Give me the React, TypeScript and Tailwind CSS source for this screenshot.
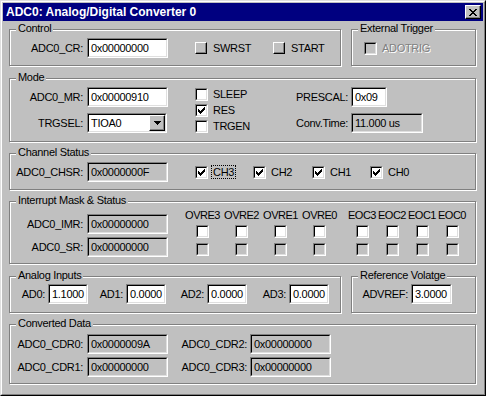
import type { ReactNode } from 'react'

// Win95-style bevels
const sunkenOuter = 'border border-t-[#808080] border-l-[#808080] border-r-white border-b-white'
const sunkenInner = 'border border-t-black border-l-black border-r-[#dfdfdf] border-b-[#dfdfdf]'
const raised = 'border border-t-white border-l-white border-r-black border-b-black shadow-[inset_-1px_-1px_0_#808080]'

function Group({ title, className, children }: { title: string; className: string; children?: ReactNode }) {
  return (
    <div className={`relative border border-[#808080] shadow-[inset_1px_1px_0_#fff,1px_1px_0_#fff] ${className}`}>
      <span className="absolute left-[6px] top-[-8px] px-[2px] bg-[#c0c0c0] leading-[13px]">{title}</span>
      {children}
    </div>
  )
}

function Field({ value, className, readOnly = false }: { value: string; className: string; readOnly?: boolean }) {
  return (
    <div className={`h-[20px] shrink-0 ${sunkenOuter} ${className}`}>
      <div className={`h-full flex items-center pl-[2px] ${sunkenInner} ${readOnly ? 'bg-[#c0c0c0]' : 'bg-white'}`}>
        {value}
      </div>
    </div>
  )
}

function CheckMark() {
  return (
    <svg width="7" height="7" viewBox="0 0 7 7" shapeRendering="crispEdges">
      <path
        fill="#000"
        d="M6 0h1v1h-1z M5 1h2v1h-2z M0 2h1v1h-1z M4 2h3v1h-3z M0 3h2v1h-2z M3 3h3v1h-3z M0 4h5v1h-5z M1 5h3v1h-3z M2 6h1v1h-1z"
      />
    </svg>
  )
}

function CheckBox({ checked = false, disabled = false }: { checked?: boolean; disabled?: boolean }) {
  return (
    <div className={`w-[13px] h-[13px] shrink-0 ${sunkenOuter}`}>
      <div className={`w-full h-full flex items-center justify-center ${sunkenInner} ${disabled ? 'bg-[#c0c0c0]' : 'bg-white'}`}>
        {checked && <CheckMark />}
      </div>
    </div>
  )
}

function Label({ text, className }: { text: string; className: string }) {
  return <div className={`text-right shrink-0 ${className}`}>{text}</div>
}

const channels = [
  { name: 'CH3', w: 'w-[58px]', focus: true },
  { name: 'CH2', w: 'w-[59px]', focus: false },
  { name: 'CH1', w: 'w-[58px]', focus: false },
  { name: 'CH0', w: 'w-[58px]', focus: false },
]

const irqCols = [
  { name: 'OVRE3', w: 'w-[39px]' },
  { name: 'OVRE2', w: 'w-[39px]' },
  { name: 'OVRE1', w: 'w-[39px]' },
  { name: 'OVRE0', w: 'w-[39px]' },
  { name: 'EOC3', w: 'w-[30px] first-of-type:ml-0' },
  { name: 'EOC2', w: 'w-[30px]' },
  { name: 'EOC1', w: 'w-[30px]' },
  { name: 'EOC0', w: 'w-[30px]' },
]

const analog = [
  { name: 'AD0:', lw: 'w-[35px]', value: '1.1000' },
  { name: 'AD1:', lw: 'w-[35px]', value: '0.0000' },
  { name: 'AD2:', lw: 'w-[38px]', value: '0.0000' },
  { name: 'AD3:', lw: 'w-[39px]', value: '0.0000' },
]

export default function App() {
  return (
    <div className="w-[486px] h-[396px] bg-[#c0c0c0] border border-t-[#dfdfdf] border-l-[#dfdfdf] border-r-black border-b-black font-['Liberation_Sans',Arial,sans-serif] text-[11px] leading-[13px] tracking-[-0.3px] text-black select-none">
      <div className="h-full border border-t-white border-l-white border-r-[#808080] border-b-[#808080] p-px">
        {/* Title bar */}
        <div className="h-[18px] bg-[#000080] flex items-center justify-between pl-[3px] pr-[2px]">
          <span className="text-white font-bold text-[12px] tracking-normal">ADC0: Analog/Digital Converter 0</span>
          <div className={`w-[16px] h-[14px] bg-[#c0c0c0] flex items-center justify-center ${raised}`}>
            <svg width="8" height="7" viewBox="0 0 8 7" shapeRendering="crispEdges">
              <path
                fill="#000"
                d="M0 0h2v1h-2z M6 0h2v1h-2z M1 1h2v1h-2z M5 1h2v1h-2z M2 2h4v1h-4z M3 3h2v1h-2z M2 4h4v1h-4z M1 5h2v1h-2z M5 5h2v1h-2z M0 6h2v1h-2z M6 6h2v1h-2z"
              />
            </svg>
          </div>
        </div>

        <div className="pl-[6px] pt-[8px]">
          {/* Control + External Trigger */}
          <div className="flex">
            <Group title="Control" className="w-[332px] h-[37px]">
              <div className="flex items-center h-[20px] mt-[8px]">
                <Label text="ADC0_CR:" className="w-[73px]" />
                <Field value="0x00000000" className="w-[81px] ml-[4px]" />
                <div className="flex items-center w-[78px] ml-[27px]">
                  <div className={`w-[12px] h-[12px] bg-[#c0c0c0] ${raised}`} />
                  <span className="ml-[6px]">SWRST</span>
                </div>
                <div className="flex items-center">
                  <div className={`w-[12px] h-[12px] bg-[#c0c0c0] ${raised}`} />
                  <span className="ml-[6px]">START</span>
                </div>
              </div>
            </Group>
            <Group title="External Trigger" className="w-[125px] h-[37px] ml-[10px]">
              <div className="flex items-center h-[20px] mt-[8px] pl-[12px]">
                <CheckBox disabled />
                <span className="ml-[5px] text-[#808080] [text-shadow:1px_1px_0_#fff]">ADOTRIG</span>
              </div>
            </Group>
          </div>

          {/* Mode */}
          <Group title="Mode" className="w-[467px] h-[64px] mt-[12px]">
            <div className="flex items-start">
              <div className="flex flex-col gap-[6px] mt-[8px]">
                <div className="flex items-center h-[20px]">
                  <Label text="ADC0_MR:" className="w-[73px]" />
                  <Field value="0x00000910" className="w-[81px] ml-[4px]" />
                </div>
                <div className="flex items-center h-[20px]">
                  <Label text="TRGSEL:" className="w-[73px]" />
                  <div className={`h-[20px] w-[80px] ml-[4px] ${sunkenOuter}`}>
                    <div className={`h-full flex items-center bg-white ${sunkenInner}`}>
                      <span className="flex-1 pl-[2px]">TIOA0</span>
                      <div className={`w-[16px] h-[16px] bg-[#c0c0c0] flex items-center justify-center ${raised}`}>
                        <svg width="7" height="4" viewBox="0 0 7 4" shapeRendering="crispEdges">
                          <path fill="#000" d="M0 0h7v1h-7z M1 1h5v1h-5z M2 2h3v1h-3z M3 3h1v1h-1z" />
                        </svg>
                      </div>
                    </div>
                  </div>
                </div>
              </div>

              <div className="flex flex-col gap-[3px] mt-[9px] ml-[27px] w-[80px]">
                <div className="flex items-center h-[13px]">
                  <CheckBox />
                  <span className="ml-[5px]">SLEEP</span>
                </div>
                <div className="flex items-center h-[13px]">
                  <CheckBox checked />
                  <span className="ml-[5px]">RES</span>
                </div>
                <div className="flex items-center h-[13px]">
                  <CheckBox />
                  <span className="ml-[5px]">TRGEN</span>
                </div>
              </div>

              <div className="flex flex-col gap-[6px] mt-[8px]">
                <div className="flex items-center h-[20px]">
                  <Label text="PRESCAL:" className="w-[73px]" />
                  <Field value="0x09" className="w-[36px] ml-[3px]" />
                </div>
                <div className="flex items-center h-[20px]">
                  <Label text="Conv.Time:" className="w-[73px]" />
                  <Field value="11.000 us" className="w-[72px] ml-[3px]" readOnly />
                </div>
              </div>
            </div>
          </Group>

          {/* Channel Status */}
          <Group title="Channel Status" className="w-[467px] h-[37px] mt-[11px]">
            <div className="flex items-center h-[20px] mt-[8px]">
              <Label text="ADC0_CHSR:" className="w-[73px]" />
              <Field value="0x0000000F" className="w-[81px] ml-[4px]" readOnly />
              <div className="flex items-center ml-[27px]">
                {channels.map((ch) => (
                  <div key={ch.name} className={`flex items-center ${ch.w}`}>
                    <CheckBox checked />
                    {ch.focus ? (
                      <span className="ml-[3px] px-px border border-dotted border-black leading-[12px]">{ch.name}</span>
                    ) : (
                      <span className="ml-[5px]">{ch.name}</span>
                    )}
                  </div>
                ))}
              </div>
            </div>
          </Group>

          {/* Interrupt Mask & Status */}
          <Group title="Interrupt Mask & Status" className="w-[467px] h-[63px] mt-[11px]">
            <div className="flex items-start">
              <div className="flex flex-col gap-[3px] mt-[12px]">
                <div className="flex items-center h-[20px]">
                  <Label text="ADC0_IMR:" className="w-[73px]" />
                  <Field value="0x00000000" className="w-[81px] ml-[4px]" readOnly />
                </div>
                <div className="flex items-center h-[20px]">
                  <Label text="ADC0_SR:" className="w-[73px]" />
                  <Field value="0x00000000" className="w-[81px] ml-[4px]" readOnly />
                </div>
              </div>
              <div className="flex ml-[15px] mt-[7px]">
                {irqCols.slice(0, 4).map((c) => (
                  <div key={c.name} className={`flex flex-col items-center ${c.w}`}>
                    <div className="tracking-[-0.5px] whitespace-nowrap">{c.name}</div>
                    <div className="mt-[3px]"><CheckBox /></div>
                    <div className="mt-[5px]"><CheckBox disabled /></div>
                  </div>
                ))}
                <div className="flex ml-[8px]">
                  {irqCols.slice(4).map((c) => (
                    <div key={c.name} className={`flex flex-col items-center ${c.w}`}>
                      <div className="tracking-[-0.5px] whitespace-nowrap">{c.name}</div>
                      <div className="mt-[3px]"><CheckBox /></div>
                      <div className="mt-[5px]"><CheckBox disabled /></div>
                    </div>
                  ))}
                </div>
              </div>
            </div>
          </Group>

          {/* Analog Inputs + Reference Voltage */}
          <div className="flex mt-[12px]">
            <Group title="Analog Inputs" className="w-[332px] h-[37px]">
              <div className="flex items-center h-[20px] mt-[7px]">
                {analog.map((a) => (
                  <div key={a.name} className="flex items-center">
                    <Label text={a.name} className={a.lw} />
                    <Field value={a.value} className="w-[40px] ml-[3px]" />
                  </div>
                ))}
              </div>
            </Group>
            <Group title="Reference Volatge" className="w-[125px] h-[37px] ml-[10px]">
              <div className="flex items-center h-[20px] mt-[7px]">
                <Label text="ADVREF:" className="w-[56px]" />
                <Field value="3.0000" className="w-[41px] ml-[3px]" />
              </div>
            </Group>
          </div>

          {/* Converted Data */}
          <Group title="Converted Data" className="w-[467px] h-[60px] mt-[11px]">
            <div className="flex flex-col gap-[3px] mt-[9px]">
              <div className="flex items-center h-[20px]">
                <Label text="ADC0_CDR0:" className="w-[73px]" />
                <Field value="0x0000009A" className="w-[81px] ml-[4px]" readOnly />
                <Label text="ADC0_CDR2:" className="w-[79px]" />
                <Field value="0x00000000" className="w-[81px] ml-[3px]" readOnly />
              </div>
              <div className="flex items-center h-[20px]">
                <Label text="ADC0_CDR1:" className="w-[73px]" />
                <Field value="0x00000000" className="w-[81px] ml-[4px]" readOnly />
                <Label text="ADC0_CDR3:" className="w-[79px]" />
                <Field value="0x00000000" className="w-[81px] ml-[3px]" readOnly />
              </div>
            </div>
          </Group>
        </div>
      </div>
    </div>
  )
}
